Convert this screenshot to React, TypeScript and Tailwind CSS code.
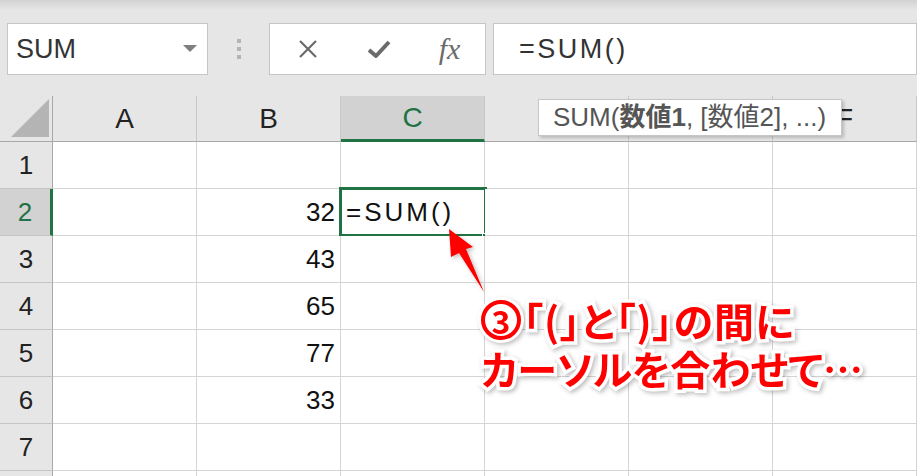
import React from 'react';

const COLS = ['A', 'B', 'C', 'D', 'E', 'F'];

const values: Record<number, string> = { 2: '32', 3: '43', 4: '65', 5: '77', 6: '33' };

const font = "font-['Liberation_Sans','Noto_Sans_CJK_JP',sans-serif]";

function Toolbar() {
  return (
    <div className="flex items-start pl-[7px] pt-[23px] h-[96px]">
      {/* Name box */}
      <div className="w-[201px] h-[52px] bg-white border border-[#c6c6c6] flex items-center justify-between pl-[8px] pr-[10px]">
        <span className="text-[27px] text-[#333] leading-none">SUM</span>
        <svg width="14" height="8" viewBox="0 0 14 8">
          <path d="M0 0 H14 L7 7 Z" fill="#7f7f7f" />
        </svg>
      </div>
      {/* grip */}
      <div className="w-[61px] h-[52px] flex flex-col items-center justify-center gap-[4px]">
        <div className="w-[4px] h-[4px] bg-[#b4b4b4]" />
        <div className="w-[4px] h-[4px] bg-[#b4b4b4]" />
        <div className="w-[4px] h-[4px] bg-[#b4b4b4]" />
      </div>
      {/* cancel / enter / fx */}
      <div className="w-[217px] h-[52px] bg-white border border-[#c6c6c6] flex items-center">
        <div className="w-[74px] flex justify-center pl-[2px]">
          <svg width="22" height="22" viewBox="0 0 22 22">
            <path d="M3 3 L19 19 M19 3 L3 19" stroke="#6b6b6b" strokeWidth="2.2" />
          </svg>
        </div>
        <div className="w-[70px] flex justify-center">
          <svg width="24" height="20" viewBox="0 0 24 20">
            <path d="M2 11 L9 17 L22 3" stroke="#6b6b6b" strokeWidth="4" fill="none" strokeLinejoin="round" />
          </svg>
        </div>
        <div className="flex-1 flex justify-center">
          <span className="font-['Liberation_Serif',serif] italic text-[30px] text-[#6b6b6b] leading-none">fx</span>
        </div>
      </div>
      {/* formula box */}
      <div className="ml-[7px] flex-1 h-[52px] bg-white border border-[#c6c6c6] flex items-center pl-[25px]">
        <span className="text-[27px] text-[#333] leading-none tracking-[2.5px]">=SUM()</span>
      </div>
    </div>
  );
}

function HeaderRow() {
  return (
    <div className="flex h-[46px]">
      <div className="w-[53px] shrink-0 border-r border-b border-[#a8a8a8] flex items-end justify-end pr-[3px] pb-[4px]">
        <svg width="38" height="38" viewBox="0 0 38 38">
          <path d="M0 38 L38 0 L38 38 Z" fill="#b4b4b4" />
        </svg>
      </div>
      {COLS.map((c) => {
        const active = c === 'C';
        return (
          <div
            key={c}
            className={
              'w-[144px] shrink-0 flex items-center justify-center text-[28px] border-r ' +
              (active
                ? 'bg-[#d2d2d2] border-[#c8c8c8] border-b-[3px] border-b-[#217346] text-[#217346]'
                : 'border-[#c8c8c8] border-b border-b-[#a8a8a8] text-[#222]')
            }
          >
            {c}
          </div>
        );
      })}
    </div>
  );
}

function Row({ n }: { n: number }) {
  const activeRow = n === 2;
  return (
    <div className="flex h-[47px]">
      <div
        className={
          'w-[53px] shrink-0 flex items-center justify-center text-[26px] border-b border-[#c4c4c4] ' +
          (activeRow
            ? 'bg-[#d2d2d2] border-r-[3px] border-r-[#217346] text-[#217346]'
            : 'bg-[#e6e6e6] border-r border-r-[#a8a8a8] text-[#222]')
        }
      >
        {n < 8 ? n : ''}
      </div>
      {COLS.map((c) => (
        <div
          key={c}
          className="relative w-[144px] shrink-0 bg-white border-r border-b border-[#d4d4d4] flex items-center text-[26px] text-[#111]"
        >
          {c === 'B' && values[n] && <span className="ml-auto pr-[5px]">{values[n]}</span>}
          {c === 'C' && n === 2 && (
            <>
              <span className="pl-[5px] tracking-[3px]">=SUM()</span>
              <div className="absolute -left-[2px] -top-[2px] w-[148px] h-[50px] border-[3px] border-[#217346]" />
              <div className="absolute -right-[5px] -bottom-[5px] w-[7px] h-[7px] bg-[#217346] border border-white" />
            </>
          )}
        </div>
      ))}
    </div>
  );
}

export default function App() {
  return (
    <div className={`relative w-[917px] h-[476px] overflow-hidden bg-[#e6e6e6] ${font}`}>
      <div className="absolute top-0 left-0 w-full h-[10px] bg-gradient-to-b from-[#d2d2d2] to-[#e6e6e6]" />
      <div className="relative">
        <Toolbar />
        <HeaderRow />
        {[1, 2, 3, 4, 5, 6, 7, 8].map((n) => (
          <Row key={n} n={n} />
        ))}
      </div>

      {/* function tooltip */}
      <div className="absolute left-[538px] top-[99px] h-[37px] pl-[14px] pr-[15px] bg-white border border-[#c6c6c6] shadow-[2px_2px_3px_rgba(0,0,0,0.2)] flex items-center text-[26px] text-[#555] whitespace-nowrap">
        SUM(<b className="font-bold">数値1</b>, [数値2], ...)
      </div>

      {/* arrow */}
      <svg className="absolute left-0 top-0 pointer-events-none" width="917" height="476" viewBox="0 0 917 476">
        <defs>
          <filter id="sh" x="-50%" y="-50%" width="200%" height="200%">
            <feDropShadow dx="2" dy="2" stdDeviation="2" floodColor="#000" floodOpacity="0.25" />
          </filter>
        </defs>
        <path d="M449 229 L473 247 L466 249 L484 292 L459 253 L451 257 Z" fill="#ff0000" filter="url(#sh)" />
      </svg>

      {/* annotation */}
      <div className="absolute left-[481px] top-[296px] font-['Noto_Sans_CJK_JP',sans-serif] font-semibold text-[40px] leading-[48px] text-[#ff0000] [font-feature-settings:'palt'] [-webkit-text-stroke:7px_white] [paint-order:stroke_fill] drop-shadow-[2px_2px_2px_rgba(0,0,0,0.25)] whitespace-nowrap">
        <div className="flex items-center">
          <span className="inline-flex items-center justify-center w-[40px] h-[40px] mr-[2px] rounded-full border-[4px] border-[#ff0000] bg-white shadow-[0_0_0_3px_white] text-[32px] leading-none [-webkit-text-stroke:0px]">
            3
          </span>
          <span className="tracking-[1px]">「(」と「)」の間に</span>
        </div>
        <div>カーソルを合わせて…</div>
      </div>
    </div>
  );
}
